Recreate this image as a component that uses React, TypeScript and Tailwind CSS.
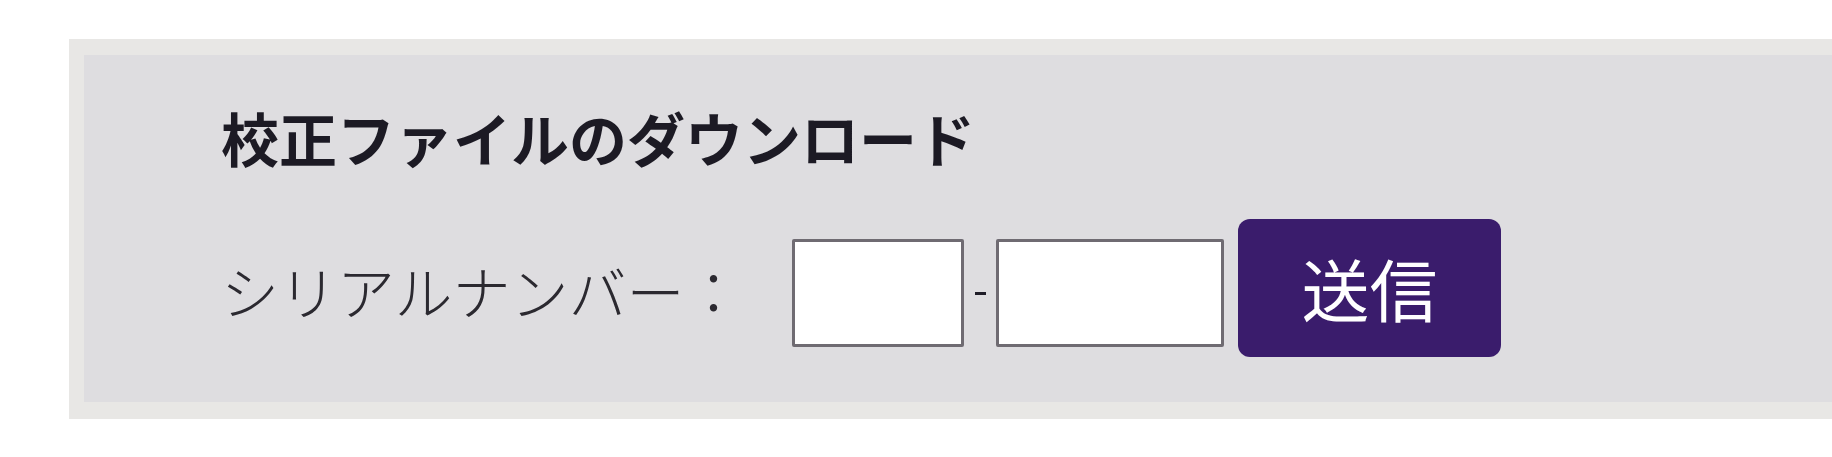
export default function App() {
  return (
    <div
      className="w-[1832px] h-[457px] bg-white overflow-hidden pt-[39px] pl-[69px]"
      style={{ fontFamily: '"Noto Sans CJK JP", "Noto Sans", sans-serif' }}
    >
      <div className="bg-[#e8e7e5] pt-[16px] pb-[17px] pl-[15px]">
        <div className="bg-[#dedde0] h-[347px] pt-[53px] pl-[137px]">
          {/* Title */}
          <h2 className="text-[58px] leading-none font-bold text-[#1c1a24] h-[57px]">
            校正ファイルのダウンロード
          </h2>

          {/* Serial number row */}
          <div className="flex items-center mt-[54px] h-[138px]">
            <span className="text-[58px] leading-none font-light text-[#2b2930] w-[571px] mt-[4px]">
              シリアルナンバー：
            </span>
            <input
              type="text"
              className="w-[172px] h-[108px] bg-white border-[3px] border-[#6f6b72] rounded-[2px] mt-[10px] outline-none"
            />
            <span className="w-[32px] flex justify-center mt-[10px]">
              <span className="block w-[11px] h-[3px] bg-[#1f1d28]"></span>
            </span>
            <input
              type="text"
              className="w-[228px] h-[108px] bg-white border-[3px] border-[#6f6b72] rounded-[2px] mt-[10px] outline-none"
            />
            <button className="ml-[14px] w-[263px] h-[138px] bg-[#3a1c6c] rounded-[12px] text-white text-[68px] leading-none font-normal">
              送信
            </button>
          </div>
        </div>
      </div>
    </div>
  );
}
